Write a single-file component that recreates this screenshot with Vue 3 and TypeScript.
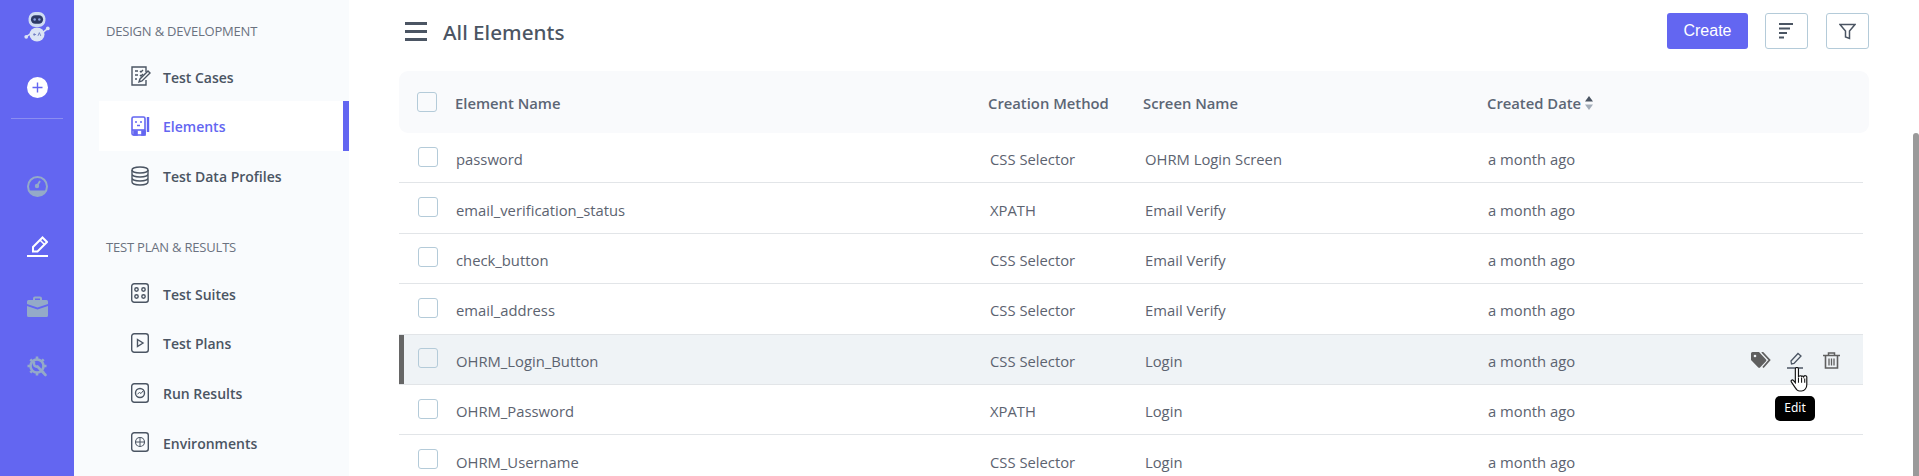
<script setup lang="ts">
interface Row { name: string; method: string; screen: string; hover?: boolean }
const rows: Row[] = [
  { name: 'password', method: 'CSS Selector', screen: 'OHRM Login Screen' },
  { name: 'email_verification_status', method: 'XPATH', screen: 'Email Verify' },
  { name: 'check_button', method: 'CSS Selector', screen: 'Email Verify' },
  { name: 'email_address', method: 'CSS Selector', screen: 'Email Verify' },
  { name: 'OHRM_Login_Button', method: 'CSS Selector', screen: 'Login', hover: true },
  { name: 'OHRM_Password', method: 'XPATH', screen: 'Login' },
  { name: 'OHRM_Username', method: 'CSS Selector', screen: 'Login' },
]
</script>

<template>
  <div class="page">
    <nav class="rail">
      <svg class="logo" width="28" height="30" viewBox="0 0 28 32">
        <path d="M3 26l6-4M25 18l-5 4" stroke="#dbe4f5" stroke-width="1.5"/>
        <circle cx="2.5" cy="26.5" r="2" fill="#dbe4f5"/><circle cx="25.5" cy="17.5" r="2" fill="#dbe4f5"/>
        <rect x="5" y="0" width="18" height="16" rx="7" fill="#cfdcf3"/>
        <rect x="7.500" y="3.500" width="13" height="9" rx="4.500" fill="#2d3a66"/>
        <circle cx="11.500" cy="8" r="1.300" fill="#8aa0e0"/><circle cx="16.500" cy="8" r="1.300" fill="#8aa0e0"/>
        <ellipse cx="14" cy="24" rx="8" ry="7.500" fill="#dbe4f5"/>
        <path d="M10 24h3M11 22.500v3M15 25.500l1.500-3.500 1.500 3.500" stroke="#6b78c0" stroke-width=".9" fill="none"/>
      </svg>
      <span class="plus">
        <svg width="11" height="11" viewBox="0 0 11 11"><path d="M5.500 .5v10M.5 5.500h10" stroke="#6366f1" stroke-width="1.400"/></svg>
      </span>
      <hr class="rail-line" />
      <svg class="r-ico gauge" width="21" height="21" viewBox="0 0 21 21">
        <circle cx="10.500" cy="10.500" r="9.500" fill="none" stroke="#94aac8" stroke-width="2"/>
        <path d="M2.500 14.500h16a8.500 8.500 0 0 1-16 0z" fill="#94aac8"/>
        <circle cx="10" cy="10" r="2.200" fill="#94aac8"/>
        <path d="M10 10l3-5" stroke="#94aac8" stroke-width="1.800"/>
      </svg>
      <svg class="r-ico pen" width="21" height="21" viewBox="0 0 21 21">
        <path d="M6 15.500V11L15.500 1.500 20 6l-9.500 9.500z" fill="none" stroke="#fff" stroke-width="2"/>
        <path d="M13 4l4.500 4.500" stroke="#fff" stroke-width="1.500"/>
        <path d="M0 20h21" stroke="#fff" stroke-width="2"/>
      </svg>
      <svg class="r-ico case" width="21" height="21" viewBox="0 0 21 21">
        <path d="M7 4.500v-2a1 1 0 0 1 1-1h5a1 1 0 0 1 1 1v2" fill="none" stroke="#94aac8" stroke-width="2"/>
        <path d="M1.500 4h18a1.500 1.500 0 0 1 1.500 1.500v2.500l-10.500 3.500-10.500-3.500v-2.500a1.500 1.500 0 0 1 1.500-1.500z" fill="#94aac8"/>
        <path d="M0 10l10.500 3.500 10.500-3.500v9.500a1.500 1.500 0 0 1-1.500 1.500h-18a1.500 1.500 0 0 1-1.500-1.500z" fill="#94aac8"/>
      </svg>
      <svg class="r-ico gear" width="21" height="21" viewBox="0 0 21 21">
        <circle cx="10" cy="10" r="6.500" fill="none" stroke="#94aac8" stroke-width="2.600"/>
        <path d="M10 .5v3M10 16.500v3M.5 10h3M16.500 10h3M3.300 3.300l2.100 2.100M14.600 14.600l2.100 2.100M3.300 16.700l2.100-2.100M14.600 5.400l2.100-2.100" stroke="#94aac8" stroke-width="2.600"/>
        <path d="M7 6.500a3 3 0 0 0 3.500 4l8 8.500" fill="none" stroke="#94aac8" stroke-width="2.600" stroke-linecap="round"/>
      </svg>
    </nav>

    <aside class="side">
      <div class="label">DESIGN &amp; DEVELOPMENT</div>
      <a class="item">
        <svg width="20" height="20" viewBox="0 0 20 20" fill="none" stroke="#4b5563" stroke-width="1.400">
          <path d="M15 6V1H1v18h14v-5"/><path d="M4 5h3M4 9h3M4 13h2M9 5l1 1 2-2M9 9l1 1 2-2"/><path d="M8 16l1-3 8-8 2 2-8 8z"/>
        </svg>
        <span>Test Cases</span>
      </a>
      <a class="item active">
        <svg width="20" height="20" viewBox="0 0 20 20" fill="none" stroke="#6366f1" stroke-width="1.600">
          <rect x="1" y="1" width="13" height="18" rx="1.500"/><path d="M17 1v15" stroke-width="2.400"/><path d="M1 14h13" stroke-width="1.600"/>
          <path d="M4 6h2M9 6h2M6 9.500h3" stroke-width="1.400"/><path d="M3 15h3v4H3zM11 15h3v4h-3z" fill="#6366f1"/>
        </svg>
        <span>Elements</span>
      </a>
      <a class="item">
        <svg width="20" height="20" viewBox="0 0 20 20" fill="none" stroke="#4b5563" stroke-width="1.400">
          <ellipse cx="9" cy="4" rx="8" ry="3"/><path d="M1 4v12c0 1.700 3.600 3 8 3s8-1.300 8-3V4M1 8c0 1.700 3.600 3 8 3s8-1.300 8-3M1 12c0 1.700 3.600 3 8 3s8-1.300 8-3"/>
        </svg>
        <span>Test Data Profiles</span>
      </a>

      <div class="label second">TEST PLAN &amp; RESULTS</div>
      <a class="item">
        <svg width="20" height="20" viewBox="0 0 20 20" fill="none" stroke="#4b5563" stroke-width="1.400">
          <rect x=".7" y=".7" width="16.600" height="18.600" rx="2.500"/><circle cx="5.500" cy="6.500" r="1.700"/><circle cx="12.500" cy="6.500" r="1.700"/><circle cx="5.500" cy="13.500" r="1.700"/><circle cx="12.500" cy="13.500" r="1.700"/>
        </svg>
        <span>Test Suites</span>
      </a>
      <a class="item">
        <svg width="20" height="20" viewBox="0 0 20 20" fill="none" stroke="#4b5563" stroke-width="1.400">
          <rect x=".7" y=".7" width="16.600" height="18.600" rx="2.500"/><path d="M6.500 6.500l5.500 3.500-5.500 3.500z"/>
        </svg>
        <span>Test Plans</span>
      </a>
      <a class="item">
        <svg width="20" height="20" viewBox="0 0 20 20" fill="none" stroke="#4b5563" stroke-width="1.400">
          <rect x=".7" y=".7" width="16.600" height="18.600" rx="2.500"/><circle cx="9" cy="10" r="4.500"/><path d="M6.500 11l2-1.500 1.500 1 2-2.500" stroke-width="1"/>
        </svg>
        <span>Run Results</span>
      </a>
      <a class="item">
        <svg width="20" height="20" viewBox="0 0 20 20" fill="none" stroke="#4b5563" stroke-width="1.400">
          <rect x=".7" y=".7" width="16.600" height="18.600" rx="2.500"/><circle cx="9" cy="10" r="4.500" stroke-width="1.100"/><path d="M4.500 10h9M9 5.500v9" stroke-width="1"/>
        </svg>
        <span>Environments</span>
      </a>
    </aside>

    <main class="main">
      <header class="top">
        <div class="burger"><i></i><i></i><i></i></div>
        <h1>All Elements</h1>
        <button class="create">Create</button>
        <button class="ghost">
          <svg width="15" height="16" viewBox="0 0 15 16"><path d="M0 1h14M0 5.500h11M0 10h8M0 14.500h5" stroke="#4b5563" stroke-width="1.800"/></svg>
        </button>
        <button class="ghost wide-gap">
          <svg width="17" height="17" viewBox="0 0 17 17"><path d="M1 1.500h15l-5.500 6.500v7.500l-4-1.500v-6z" fill="none" stroke="#4b5563" stroke-width="1.500"/></svg>
        </button>
      </header>

      <div class="thead">
        <span class="check"></span>
        <span class="c-name">Element Name</span>
        <span class="c-method">Creation Method</span>
        <span class="c-screen">Screen Name</span>
        <span class="c-date">Created Date
          <svg width="8" height="14" viewBox="0 0 8 14"><path d="M4 0l4 5.500H0z" fill="#4b5563"/><path d="M4 14l4-5.500H0z" fill="#a3adb9"/></svg>
        </span>
      </div>

      <div v-for="r in rows" :key="r.name" class="row" :class="{ hover: r.hover }">
        <span class="check"></span>
        <span class="c-name">{{ r.name }}</span>
        <span class="c-method">{{ r.method }}</span>
        <span class="c-screen">{{ r.screen }}</span>
        <span class="c-date">a month ago</span>
        <div v-if="r.hover" class="actions">
          <svg class="a-tag" width="20" height="17" viewBox="0 0 20 17">
            <path d="M0 1.500A1.500 1.500 0 0 1 1.500 0H8l7 7.500a1.200 1.200 0 0 1 0 1.700L9 15.500a1.200 1.200 0 0 1-1.700 0L0 8z" fill="#5f5f5f"/>
            <path d="M11 0l7.500 8-6.500 7.500" fill="none" stroke="#5f5f5f" stroke-width="1.800"/>
            <circle cx="4" cy="4" r="1.300" fill="#eff3f6"/>
          </svg>
          <svg class="a-edit" width="17" height="17" viewBox="0 0 17 17">
            <path d="M4.500 12l-.5-3 7-7.500 3 2.500-7 7.500z" fill="none" stroke="#4b5563" stroke-width="1.300"/>
            <path d="M0 16h16" stroke="#4b5563" stroke-width="1.500"/>
          </svg>
          <svg width="17" height="17" viewBox="0 0 17 17" fill="none" stroke="#5f5f5f">
            <path d="M0 3.500h17M5.500 3V1h6v2" stroke-width="1.500"/>
            <path d="M2.500 4v12h12V4" stroke-width="1.600"/>
            <path d="M6 6.500v7M8.500 6.500v7M11 6.500v7" stroke-width="1.300"/>
          </svg>
          <svg class="hand" width="19" height="25" viewBox="0 0 18 24">
            <path d="M5 2a1.500 1.500 0 0 1 3 0v7l1-.3a1.300 1.300 0 0 1 2 .3 1.300 1.300 0 0 1 2 .5 1.300 1.300 0 0 1 3 .8V17c0 3-2 6-5 6H9c-2 0-3-1-4-3l-3.700-5.500c-1-1.500 .7-2.800 2-1.500L5 15z" fill="#fff" stroke="#111" stroke-width="1.100"/>
            <path d="M8 10v5M11 10v5M14 11v4" stroke="#111" stroke-width="1"/>
          </svg>
          <span class="tip">Edit</span>
        </div>
      </div>
    </main>

    <div class="scroll"><i></i></div>
  </div>
</template>

<style>
html, body { margin: 0; overflow: hidden; background: #fff; }
</style>

<style scoped>
.page { display: flex; width: 1919px; height: 476px; overflow: hidden; font-family: "Open Sans", "Noto Sans", sans-serif; color: #4b5563; }
.rail { width: 74px; flex: none; background: #6366f1; display: flex; flex-direction: column; align-items: center; }
.logo { margin-top: 12px; }
.plus { width: 21px; height: 21px; margin-top: 35px; border-radius: 50%; background: #fff; display: flex; align-items: center; justify-content: center; }
.rail-line { width: 52px; height: 1px; margin: 20px 0 0; border: 0; background: #8b8df0; }
.r-ico { display: block; }
.gauge { margin-top: 57px; }
.pen { margin-top: 39px; }
.case { margin-top: 39px; }
.gear { margin-top: 39px; }

.side { width: 250px; flex: none; padding-left: 25px; background: #f9fbfd; }
.label { padding: 22px 0 0 7px; height: 29.300px; font-size: 13px; line-height: 18px; color: #6b7280; letter-spacing: -.2px; }
.label.second { padding-top: 0; margin-top: 38px; height: 30px; }
.item { display: flex; align-items: center; height: 49.700px; padding-left: 32px; font-size: 14px; font-weight: 600; color: #4b5563; }
.item span { padding-top: 2px; }
.item svg { width: 20px; margin-right: 12px; }
.item.active { background: #fff; color: #6366f1; border-right: 6px solid #6366f1; }

.main { flex: 1; min-width: 0; padding-left: 50px; padding-right: 50px; }
.top { display: flex; align-items: center; height: 71px; padding-bottom: 9px; box-sizing: border-box; padding-left: 6px; }
.burger { width: 22px; display: flex; flex-direction: column; gap: 5px; margin-right: 16px; }
.burger i { height: 3px; background: #4b5563; }
h1 { flex: 1; margin: 0; padding-top: 2px; font-size: 20.700px; font-weight: 500; color: #4b5563; font-family: "Noto Sans", sans-serif; }
button { padding: 0; background: #fff; font: inherit; }
.create { width: 81px; height: 36px; border: 0; border-radius: 3px; background: #6366f1; color: #fff; font-family: "Liberation Sans", sans-serif; font-size: 16px; }
.ghost { width: 43px; height: 36px; margin-left: 17px; border: 1px solid #b4cbd9; border-radius: 3px; display: flex; align-items: center; justify-content: center; }
.ghost.wide-gap { margin-left: 18px; }

.thead, .row { display: flex; align-items: center; position: relative; }
.thead { width: 1470px; height: 62px; padding-left: 18px; box-sizing: border-box; background: #f9fafc; border-radius: 9px; font-size: 14.800px; font-weight: 600; color: #5c6675; }
.thead .c-name { margin-left: 18px; width: 533px; }
.thead .c-method { width: 155px; }
.thead .c-screen { width: 344px; }
.thead span:not(.check) { padding-top: 2px; }
.row { width: 1464px; height: 50.400px; padding-left: 19px; box-sizing: border-box; border-bottom: 1px solid #e2e5e8; font-size: 14.800px; color: #5c6370; }
.row.hover { background: #eff3f6; border-top: 1px solid #e2e5e8; margin-top: -1px; height: 51.400px; box-shadow: inset 5px 0 0 #666; }
.row .c-name { margin-left: 18px; }
.row span:not(.check):not(.tip) { padding-top: 3px; }
.row .check { margin-top: -2px; }
.check { width: 20px; height: 20px; flex: none; box-sizing: border-box; border: 1px solid #b4cbd9; border-radius: 3px; background: transparent; }
.c-name { width: 534px; flex: none; white-space: nowrap; }
.c-method { width: 155px; flex: none; white-space: nowrap; }
.c-screen { width: 343px; flex: none; white-space: nowrap; }
.c-date { display: flex; align-items: center; gap: 4px; white-space: nowrap; }
.actions { position: absolute; left: 1352px; top: 0; height: 52px; display: flex; align-items: center; }
.a-edit { margin-left: 16px; margin-right: 19px; }
.hand { position: absolute; left: 39px; top: 32px; }
.tip { position: absolute; left: 24px; top: 61px; width: 40px; height: 25px; background: #000; color: #fff; border-radius: 5px; font-size: 12px; line-height: 24px; text-align: center; font-family: "Noto Sans", sans-serif; }

.scroll { position: fixed; right: 0; top: 0; bottom: 0; width: 6px; }
.scroll i { position: absolute; top: 133px; bottom: 0; left: 0; right: 0; background: #9a9a9a; border-radius: 3px 3px 0 0; }
</style>
